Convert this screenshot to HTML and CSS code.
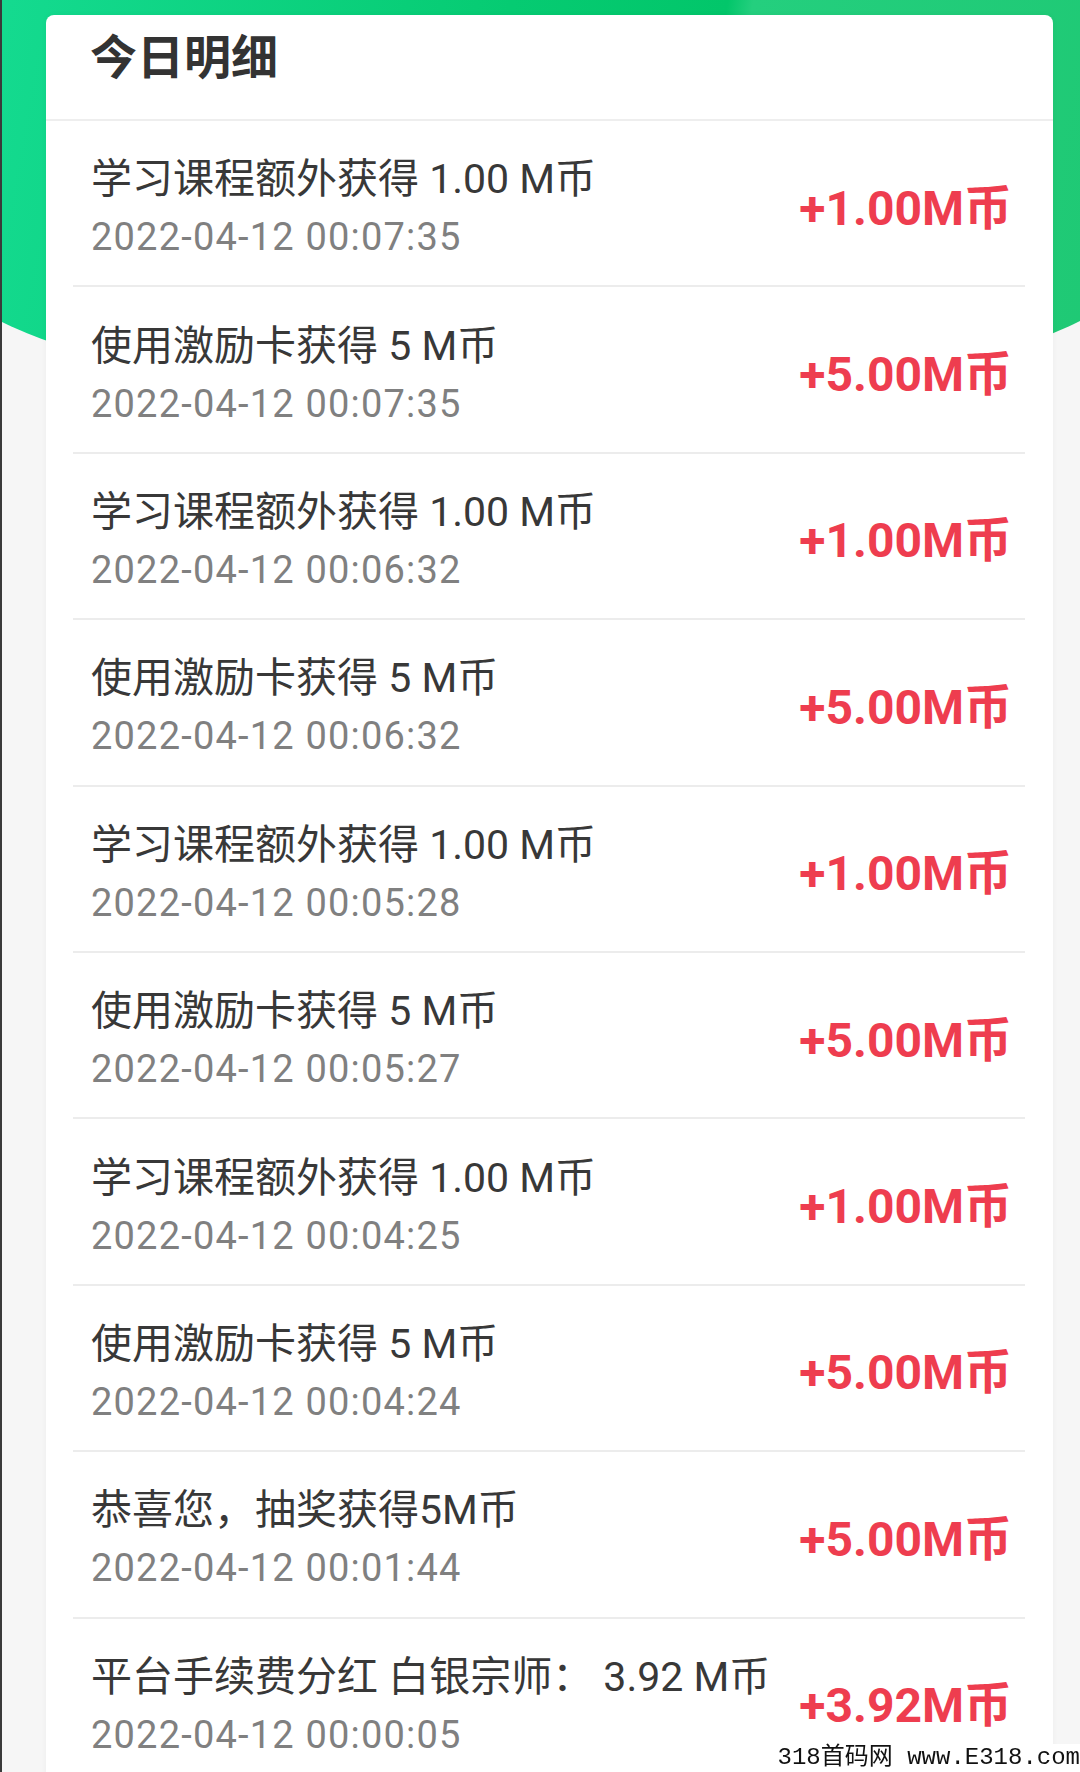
FILE: index.html
```html
<!DOCTYPE html>
<html lang="zh-CN">
<head>
<meta charset="UTF-8">
<title>今日明细</title>
<link rel="stylesheet" href="styles.css">
</head>
<body>

<div class="banner"></div>

<div class="card">
  <div class="card-head">今日明细</div>

  <ul class="list">
    <li class="item">
      <div class="info">
        <div class="info-title">学习课程额外获得 1.00 M币</div>
        <div class="info-time">2022-04-12 00:07:35</div>
      </div>
      <div class="amount">+1.00M币</div>
    </li>
    <li class="item">
      <div class="info">
        <div class="info-title">使用激励卡获得 5 M币</div>
        <div class="info-time">2022-04-12 00:07:35</div>
      </div>
      <div class="amount">+5.00M币</div>
    </li>
    <li class="item">
      <div class="info">
        <div class="info-title">学习课程额外获得 1.00 M币</div>
        <div class="info-time">2022-04-12 00:06:32</div>
      </div>
      <div class="amount">+1.00M币</div>
    </li>
    <li class="item">
      <div class="info">
        <div class="info-title">使用激励卡获得 5 M币</div>
        <div class="info-time">2022-04-12 00:06:32</div>
      </div>
      <div class="amount">+5.00M币</div>
    </li>
    <li class="item">
      <div class="info">
        <div class="info-title">学习课程额外获得 1.00 M币</div>
        <div class="info-time">2022-04-12 00:05:28</div>
      </div>
      <div class="amount">+1.00M币</div>
    </li>
    <li class="item">
      <div class="info">
        <div class="info-title">使用激励卡获得 5 M币</div>
        <div class="info-time">2022-04-12 00:05:27</div>
      </div>
      <div class="amount">+5.00M币</div>
    </li>
    <li class="item">
      <div class="info">
        <div class="info-title">学习课程额外获得 1.00 M币</div>
        <div class="info-time">2022-04-12 00:04:25</div>
      </div>
      <div class="amount">+1.00M币</div>
    </li>
    <li class="item">
      <div class="info">
        <div class="info-title">使用激励卡获得 5 M币</div>
        <div class="info-time">2022-04-12 00:04:24</div>
      </div>
      <div class="amount">+5.00M币</div>
    </li>
    <li class="item">
      <div class="info">
        <div class="info-title">恭喜您，抽奖获得5M币</div>
        <div class="info-time">2022-04-12 00:01:44</div>
      </div>
      <div class="amount">+5.00M币</div>
    </li>
    <li class="item">
      <div class="info">
        <div class="info-title">平台手续费分红 白银宗师： 3.92 M币</div>
        <div class="info-time">2022-04-12 00:00:05</div>
      </div>
      <div class="amount">+3.92M币</div>
    </li>
  </ul>
</div>

<div class="watermark">318首码网 www.E318.com</div>

</body>
</html>
```

FILE: styles.css
```css
* {
  box-sizing: border-box;
}

body {
  margin: 0;
  background-color: #f6f6f6;
  border-left: 2px solid #3a3a3a;
  overflow-x: hidden;
  font-family: Roboto, "Noto Sans CJK SC", sans-serif;
}

/* 上部の緑の背景（下側は楕円） */
.banner {
  width: 1200px;
  height: 404px;
  margin-left: -62px;
  background: linear-gradient(100deg, #16dc93 0%, #06cb72 45%, #02c66a 62%, #24cf7e 64%, #1ec873 100%);
  border-radius: 0 0 600px 600px / 0 0 147px 147px;
}

.card {
  margin: -389px 0 0 44px;
  width: 1007px;
  background-color: #fff;
  border-radius: 8px 8px 0 0;
  box-shadow: 0 0 6px rgba(0, 0, 0, 0.04);
}

.card-head {
  height: 106px;
  padding: 15px 0 0 44px;
  border-bottom: 2px solid #eeeeee;
  font-size: 47px;
  line-height: 56px;
  font-weight: bold;
  color: #333;
}

.list {
  list-style: none;
  margin: 0;
  padding: 0 28px 0 27px;
}

.item {
  display: flex;
  align-items: center;
  justify-content: space-between;
  height: 166.4px;
  padding: 0 13px 0 18px;
  border-bottom: 2px solid #ececec;
}

.info {
  margin-top: 8px;
}

.info-title {
  font-size: 41px;
  line-height: 52px;
  color: #383838;
  white-space: nowrap;
}

.info-time {
  margin-top: 8px;
  font-size: 38px;
  line-height: 48px;
  letter-spacing: 1.2px;
  color: #808080;
}

.amount {
  margin-top: 1px;
  font-size: 48px;
  font-weight: bold;
  color: #ee3d4f;
  white-space: nowrap;
}

/* 右下の透かし */
.watermark {
  position: fixed;
  right: 0;
  bottom: 0;
  padding: 0 0 0 6px;
  background-color: #fff;
  font-family: "Liberation Mono", "Noto Sans CJK SC", monospace;
  font-size: 24px;
  line-height: 28px;
  color: #111;
  white-space: nowrap;
}
```
